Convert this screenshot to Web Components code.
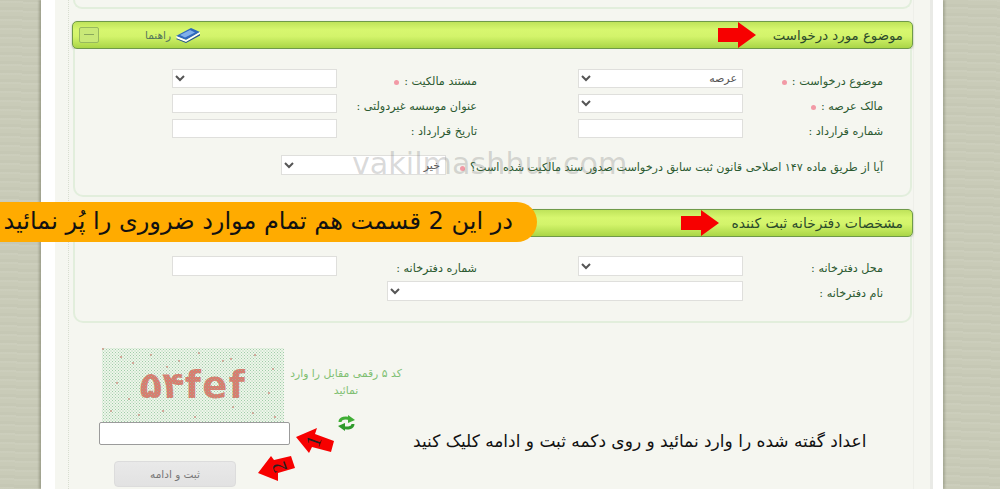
<!DOCTYPE html>
<html lang="fa">
  <head>
    <meta charset="UTF-8" />
    <title>Form</title>
    <style>
      html, body { margin: 0; height: 489px; overflow: hidden; }
      body {
        font-family: "DejaVu Sans", sans-serif;
        background-color: #c9cbb8;
        background-image:
          repeating-linear-gradient(2deg, rgba(255,255,255,.05) 0 2px, rgba(0,0,0,.015) 2px 5px, transparent 5px 9px);
      }
    </style>
  </head>
  <body>
    <page-shell>
      <form-section cut></form-section>

      <form-section title="موضوع مورد درخواست" gap="17" guide>
        <form-field label="موضوع درخواست :" required type="select" value="عرصه"></form-field>
        <form-field label="مستند مالکیت :" required type="select"></form-field>
        <form-field label="مالک عرصه :" required type="select"></form-field>
        <form-field label="عنوان موسسه غیردولتی :"></form-field>
        <form-field label="شماره قرارداد :"></form-field>
        <form-field label="تاریخ قرارداد :"></form-field>
        <form-field long label="آیا از طریق ماده ۱۴۷ اصلاحی قانون ثبت سابق درخواست صدور سند مالکیت شده است؟" required type="select" value="خیر"></form-field>
      </form-section>

      <form-section title="مشخصات دفترخانه ثبت کننده" gap="13" tight>
        <form-field tall label="محل دفترخانه :" type="select"></form-field>
        <form-field tall label="شماره دفترخانه :"></form-field>
        <form-field wide label="نام دفترخانه :" type="select"></form-field>
      </form-section>

      <captcha-box code="۵۴fef"></captcha-box>
    </page-shell>

    <script>
      class PageShell extends HTMLElement {
        constructor() {
          super();
          this.attachShadow({ mode: "open" });
        }

        connectedCallback() {
          this.shadowRoot.innerHTML = `
            <style>
              :host {
                display: block;
                position: relative;
                box-sizing: border-box;
                width: 902px;
                height: 489px;
                margin-left: 41px;
                padding: 0 10px 0 14px;
                background: #fff;
                box-shadow: -2px 0 2px rgba(110,112,90,.45), 2px 0 2px rgba(110,112,90,.35);
              }
              .panel {
                box-sizing: border-box;
                height: 489px;
                padding: 0 16px 0 13px;
                background: #f5f6f0;
                border-right: 3px solid #e9eae6;
              }
              .rail {
                height: 489px;
                border-left: 1px dotted #d8ddd0;
                border-right: 1px solid #eeefe9;
              }
              .mark {
                position: absolute;
                left: 311px;
                top: 145px;
                font: 30.2px/38px "DejaVu Sans", sans-serif;
                color: rgba(110,110,110,.26);
                white-space: nowrap;
              }
              .banner {
                position: absolute;
                left: -41px;
                top: 202px;
                box-sizing: border-box;
                width: 537px;
                height: 40px;
                padding-right: 24px;
                background: #ffab00;
                border-radius: 0 20px 20px 0;
                font: 24px/38px "DejaVu Sans", sans-serif;
                color: #111;
                text-align: right;
                white-space: nowrap;
              }
              .picks {
                position: absolute;
                left: 214px;
                top: 425px;
              }
            </style>
            <div class="panel"><div class="rail"><slot></slot></div></div>
            <div class="mark">vakilmashhur.com</div>
            <div class="banner" dir="rtl">در این 2 قسمت هم تمام موارد ضروری را پُر نمائید</div>
            <svg class="picks" width="90" height="60" viewBox="255 425 90 60">
              <polygon fill="#f70000" points="296,437 317,428 315,434 334,441 331,452 312,447 309,453" />
              <text transform="translate(320,443.6) rotate(-70)" font-family="Liberation Serif" font-size="21" text-anchor="middle" fill="#222">1</text>
              <polygon fill="#f70000" points="258,473 271,456 274,460 291,456 295,468 278,473 278,481" />
              <text transform="translate(285.5,464.7) rotate(-110)" font-family="Liberation Serif" font-size="20" text-anchor="middle" fill="#222">2</text>
            </svg>
          `;
        }
      }

      class FormSection extends HTMLElement {
        constructor() {
          super();
          this.attachShadow({ mode: "open" });
        }

        connectedCallback() {
          const title = this.getAttribute("title");
          const gap = this.getAttribute("gap") || 17;
          // the second bar's left end sits under the orange banner, so no guide link there
          const guide = this.hasAttribute("guide") ? `
            <button class="fold" tabindex="-1"></button>
            <span class="guide">راهنما</span>
            <svg class="book" width="24" height="15" viewBox="0 0 24 15">
              <polygon fill="#2f69bd" points="0,8 15,0 24,4 10,12" />
              <polygon fill="#7fb0ea" points="4,7 14,2 19,4.5 9,9.5" />
              <polygon fill="#fff" points="0,8 10,12 24,4 24,6 10,14 1,10.5" />
              <polygon fill="#1f4f96" points="1,10.5 10,14 24,6 24,7.5 10,15 0,11" />
            </svg>` : "";
          // the first card only shows its bottom edge at the top of the page
          const head = title ? `
            <div class="bar">
              ${guide}
              <svg class="arrow" style="margin-right:${gap}px" width="38" height="26" viewBox="0 0 38 26">
                <polygon fill="#f70000" points="0,6 20,6 20,0 38,13 20,26 20,20 0,20" />
              </svg>
              <span class="title" dir="rtl">${title}</span>
            </div>` : "";
          this.shadowRoot.innerHTML = `
            <style>
              :host {
                display: block;
                margin: 0 0 12px 4px;
                width: 839px;
              }
              :host([cut]) { height: 9px; }
              .bar {
                display: flex;
                align-items: center;
                box-sizing: border-box;
                width: 841px;
                height: 28px;
                margin-left: -1px;
                padding: 0 9px 0 6px;
                background: linear-gradient(#bfe35a, #d7f76f 30%, #d3f46b 55%, #aad647);
                border: 1px solid #6f9a49;
                border-radius: 5px;
                box-shadow: 0 1px 2px rgba(90,120,60,.5);
              }
              .fold {
                position: relative;
                width: 20px;
                height: 16px;
                padding: 0;
                background: #c9e978;
                border: 1px solid #98b95e;
                border-radius: 2px;
              }
              .fold::after {
                content: "";
                position: absolute;
                left: 4px;
                right: 4px;
                top: 6px;
                height: 1px;
                background: #8aa85c;
              }
              .guide {
                margin-left: 46px;
                font-size: 10.5px;
                color: #55775a;
              }
              .book { margin-left: 5px; }
              .arrow { margin-left: auto; }
              .title {
                font-size: 13.3px;
                color: #2b4a2b;
                white-space: nowrap;
              }
              :host([tight]) .title { font-size: 13.9px; }
              .body {
                display: grid;
                grid-template-columns: 305px 305px;
                column-gap: 101px;
                row-gap: 6px;
                justify-content: start;
                direction: rtl;
                padding: 20px 27px 20px 0;
              }
              :host([tight]) .body {
                row-gap: 5px;
                padding-top: 19px;
              }
              .card {
                box-sizing: border-box;
                background: #f5f6f0;
                border: 2px solid #e2eedc;
                border-top: 0;
                border-radius: 0 0 10px 10px;
              }
              :host([cut]) .card { height: 9px; }
            </style>
            ${head}
            <div class="card">
              ${title ? `<div class="body"><slot></slot></div>` : ""}
            </div>
          `;
        }
      }

      class FormField extends HTMLElement {
        constructor() {
          super();
          this.attachShadow({ mode: "open" });
        }

        connectedCallback() {
          const label = this.getAttribute("label");
          const value = this.getAttribute("value") || "";
          const dot = this.hasAttribute("required") ? `<i class="dot"></i>` : "";
          const control = this.getAttribute("type") === "select"
            ? `<select tabindex="-1"><option>${value}</option></select>`
            : `<input tabindex="-1" />`;
          this.shadowRoot.innerHTML = `
            <style>
              :host {
                display: grid;
                grid-template-columns: 140px 165px;
                align-items: center;
                direction: rtl;
                height: 19px;
              }
              :host([tall]) { height: 20px; }
              :host([wide]) {
                grid-column: 1 / -1;
                grid-template-columns: 140px 356px;
                height: 20px;
              }
              :host([long]) {
                grid-column: 1 / -1;
                grid-template-columns: 437px 165px;
                height: 20px;
                margin-top: 11px;
              }
              label {
                position: relative;
                top: 2.5px;
                font-size: 11.2px;
                color: #2c5a31;
                white-space: nowrap;
              }
              .dot {
                display: inline-block;
                width: 5px;
                height: 5px;
                margin-right: 5px;
                border-radius: 50%;
                background: #f29aa6;
              }
              input, select {
                box-sizing: border-box;
                width: 100%;
                height: 100%;
                margin: 0;
                padding: 0 1px 0 4px;
                background: #fff;
                border: 1px solid #dfdfdc;
                border-radius: 0;
                font: 11px "DejaVu Sans", sans-serif;
                color: #555;
                direction: rtl;
              }
            </style>
            <label>${label}${dot}</label>
            ${control}
          `;
        }
      }

      class CaptchaBox extends HTMLElement {
        constructor() {
          super();
          this.attachShadow({ mode: "open" });
        }

        connectedCallback() {
          this.shadowRoot.innerHTML = `
            <style>
              :host {
                display: flex;
                align-items: flex-start;
                padding: 13px 0 0 30px;
              }
              .left { width: 191px; }
              .code {
                position: relative;
                box-sizing: border-box;
                width: 182px;
                height: 74px;
                margin-left: 3px;
                padding-top: 18px;
                background-color: #eef5ea;
                text-align: center;
                font: bold 37px/40px "DejaVu Sans", sans-serif;
                letter-spacing: 1.5px;
                color: #e0756c;
                overflow: hidden;
              }
              .code::before {
                content: "";
                position: absolute;
                left: 0;
                top: 0;
                width: 2px;
                height: 2px;
                border-radius: 50%;
                background: #d98a80;
                box-shadow: 18px 8px #d98a80, 30px 14px #d98a80, 48px 6px #d98a80, 64px 18px #d98a80,
                  96px 4px #d98a80, 120px 12px #d98a80, 128px 10px #d98a80, 152px 6px #d98a80,
                  170px 20px #d98a80, 14px 34px #d98a80, 26px 50px #d98a80, 36px 66px #d98a80,
                  60px 62px #d98a80, 92px 68px #d98a80, 130px 58px #d98a80, 150px 64px #d98a80,
                  166px 44px #d98a80, 172px 68px #d98a80, 8px 62px #d98a80, 76px 12px #d98a80;
              }
              .code::after {
                content: "";
                position: absolute;
                inset: 0;
                background-image:
                  radial-gradient(circle, #8cc498 0.8px, transparent 1px),
                  radial-gradient(circle, #8cc498 0.8px, transparent 1px);
                background-size: 3px 3px;
                background-position: 0 0, 1.5px 1.5px;
                opacity: .8;
              }
              input {
                display: block;
                box-sizing: border-box;
                width: 191px;
                height: 23px;
                margin: 0;
                background: #fff;
                border: 1px solid #9b9b9b;
                border-radius: 2px;
              }
              button {
                display: block;
                width: 122px;
                height: 26px;
                margin: 16px 0 0 15px;
                padding: 0;
                background: linear-gradient(#e9e9e9, #e2e2e2);
                border: 1px solid #dcdcdc;
                border-radius: 4px;
                font: 10.5px "DejaVu Sans", sans-serif;
                color: #777;
              }
              .hint {
                width: 116px;
                margin-left: -2px;
                padding-top: 17px;
                text-align: center;
                font-size: 10.8px;
                line-height: 17px;
                color: #7fbf72;
              }
              .hint svg {
                display: block;
                margin: 16px auto 0;
              }
              .note {
                margin: 82px 0 0 9px;
                font-size: 17px;
                line-height: 22px;
                color: #111;
                white-space: nowrap;
              }
            </style>
            <div class="left">
              <div class="code">${this.getAttribute("code")}</div>
              <input tabindex="-1" />
              <button tabindex="-1">ثبت و ادامه</button>
            </div>
            <div class="hint" dir="rtl">
              کد ۵ رقمی مقابل را وارد نمائید
              <svg width="17" height="16" viewBox="0 0 17 16">
                <path fill="none" stroke="#3fae35" stroke-width="3" d="M2 7 C2 3 8 2 12 4" />
                <polygon fill="#3fae35" points="10,0 17,5 10,8" />
                <path fill="none" stroke="#2f9a2b" stroke-width="3" d="M15 9 C15 13 9 14 5 12" />
                <polygon fill="#2f9a2b" points="7,8 0,11 7,16" />
              </svg>
            </div>
            <div class="note" dir="rtl">اعداد گفته شده را وارد نمائید و روی دکمه ثبت و ادامه کلیک کنید</div>
          `;
        }
      }

      window.customElements.define("page-shell", PageShell);
      window.customElements.define("form-section", FormSection);
      window.customElements.define("form-field", FormField);
      window.customElements.define("captcha-box", CaptchaBox);
    </script>
  </body>
</html>
